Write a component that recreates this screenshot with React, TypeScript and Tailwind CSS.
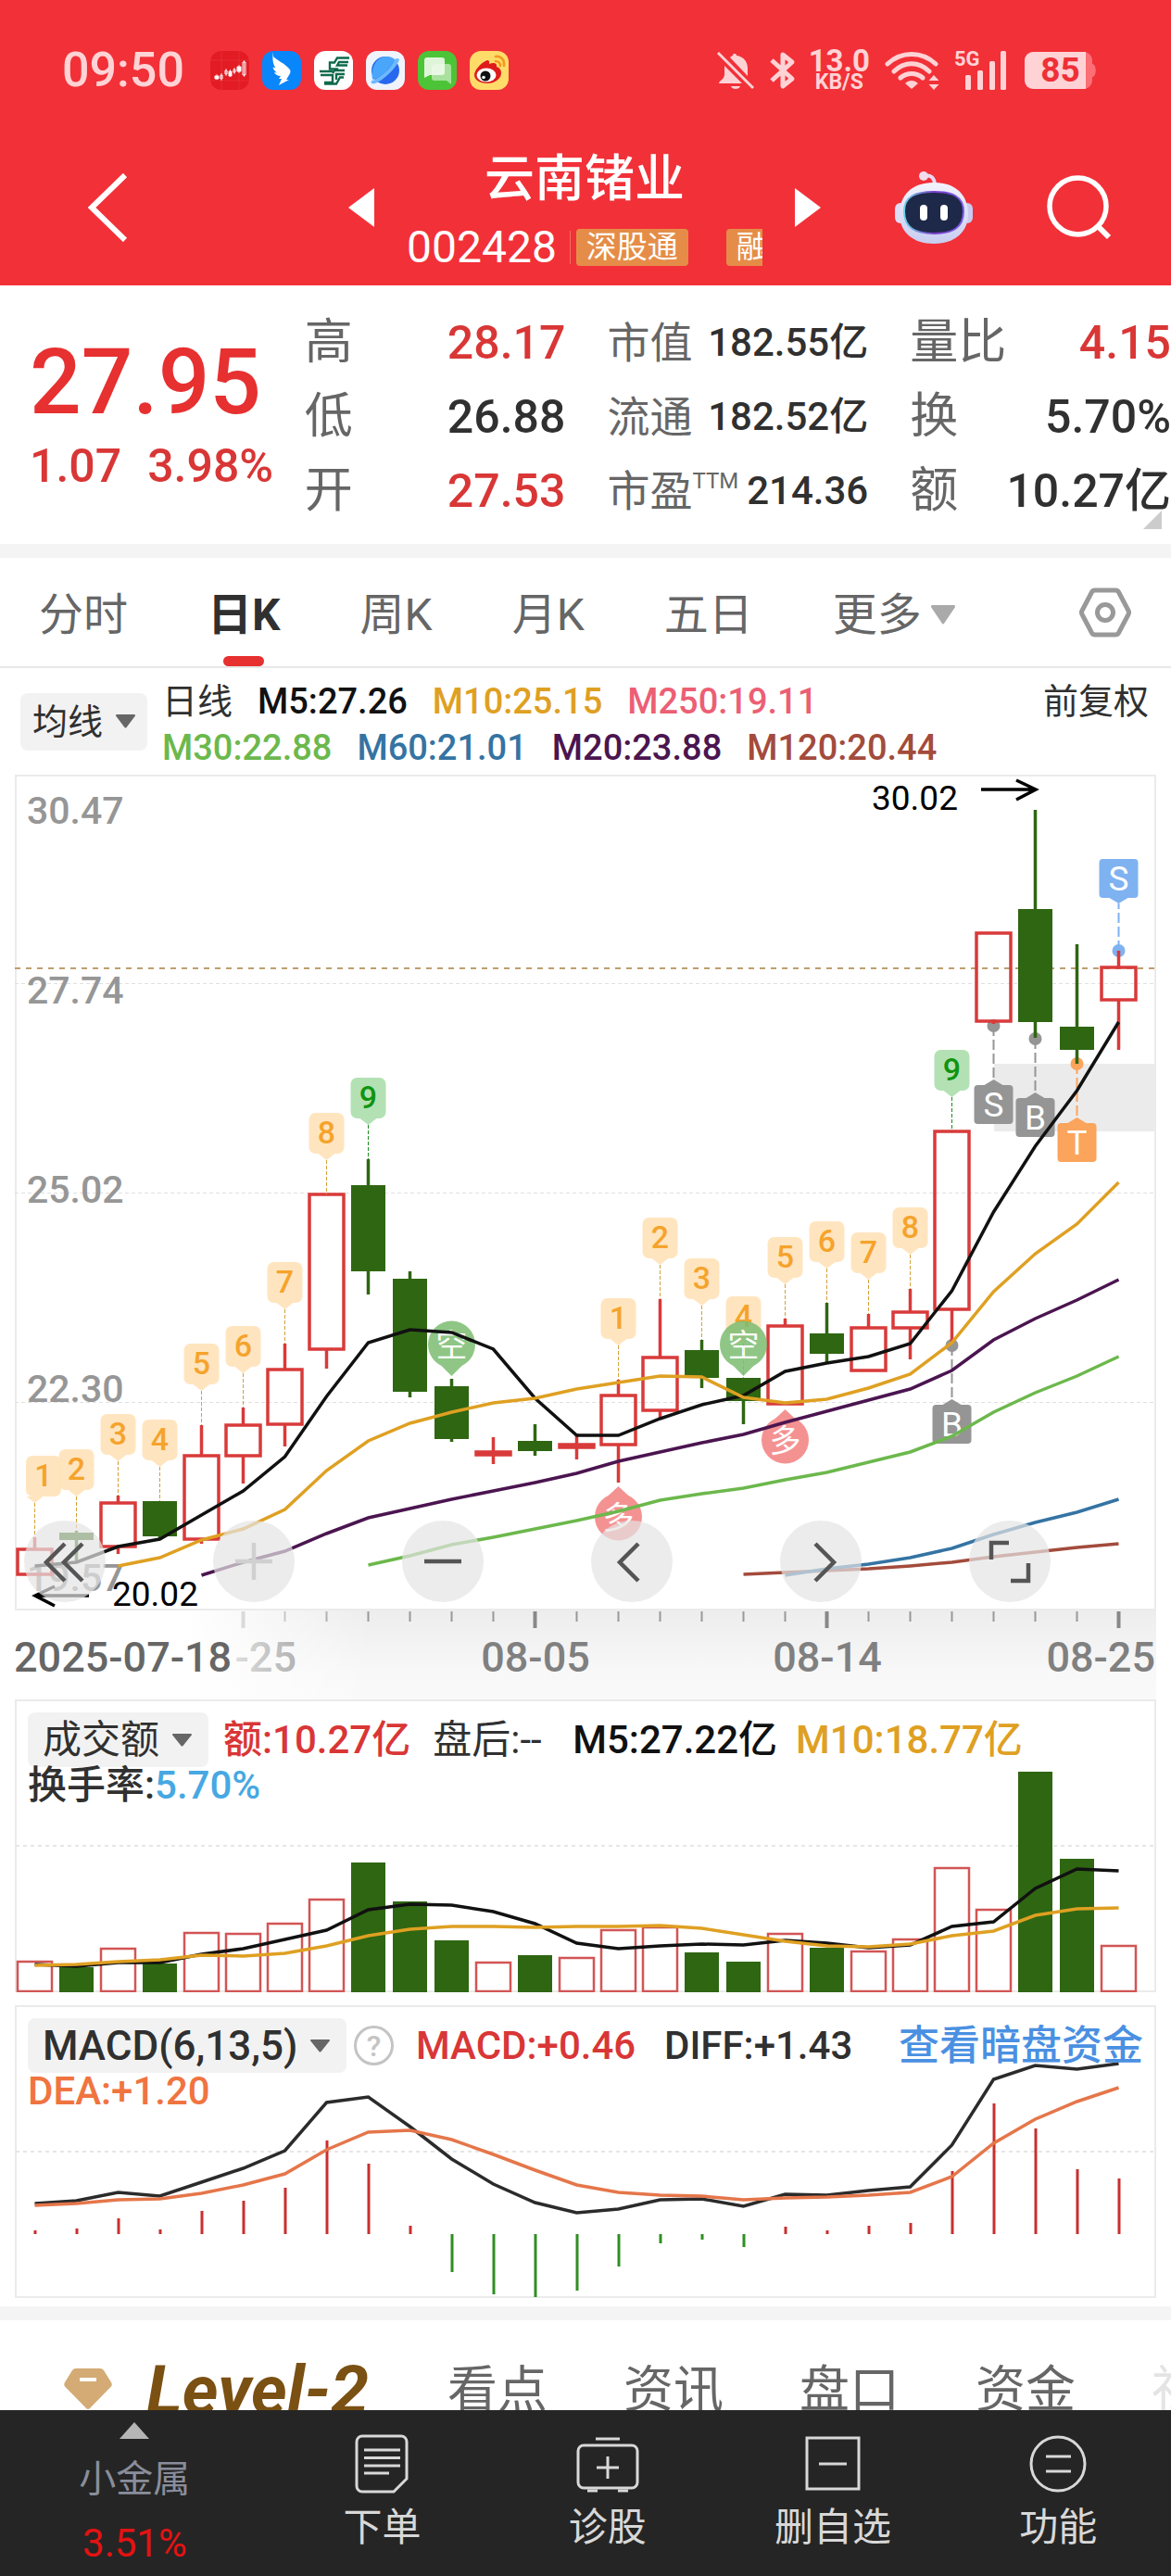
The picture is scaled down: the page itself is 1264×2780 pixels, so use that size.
import type { ReactNode } from "react";

// ---------- data ----------

const STEP = 45;
const FIRST_X = 37.5;
const BODY = 37;

const UP = "#d93a3a";
const DOWN = "#2f6612";
const GOLD = "#dfa022";

// All three panels are cut from one canvas, so y values run on from panel to panel.
// [direction, high, body top, body bottom, low]
type Candle = ["up" | "down", number, number, number, number];

const candles: Candle[] = [
  ["up", 1659, 1672, 1699, 1699],
  ["down", 1652, 1654, 1662, 1685],
  ["up", 1614, 1622, 1669, 1677],
  ["down", 1620, 1620, 1658, 1661],
  ["up", 1538, 1571, 1661, 1666],
  ["up", 1519, 1538, 1571, 1601],
  ["up", 1450, 1478, 1537, 1561],
  ["up", 1289, 1289, 1456, 1477],
  ["down", 1251, 1279, 1372, 1397],
  ["down", 1372, 1380, 1502, 1508],
  ["down", 1488, 1496, 1553, 1556],
  ["up", 1551, 1567, 1570, 1580],
  ["down", 1537, 1555, 1566, 1571],
  ["up", 1547, 1559, 1562, 1575],
  ["up", 1489, 1506, 1559, 1600],
  ["up", 1402, 1465, 1522, 1531],
  ["down", 1446, 1457, 1487, 1498],
  ["down", 1487, 1487, 1512, 1537],
  ["up", 1423, 1431, 1515, 1516],
  ["down", 1406, 1439, 1461, 1470],
  ["up", 1418, 1433, 1479, 1479],
  ["up", 1391, 1416, 1433, 1467],
  ["up", 1221, 1221, 1413, 1448],
  ["up", 1007, 1007, 1102, 1105],
  ["down", 874, 981, 1103, 1120],
  ["down", 1019, 1108, 1133, 1148],
  ["up", 1026, 1044, 1079, 1133],
];

// nine-turn counts: candle index -> count
const counts: [number, number][] = [
  [0, 1], [1, 2], [2, 3], [3, 4], [4, 5], [5, 6], [6, 7], [7, 8], [8, 9],
  [14, 1], [15, 2], [16, 3], [17, 4], [18, 5], [19, 6], [20, 7], [21, 8], [22, 9],
];

const averages = [
  { color: "#a34b3c", from: 17, ys: [1699, 1697, 1695, 1693, 1690, 1686, 1680, 1675, 1670, 1666] },
  { color: "#3474a3", from: 18, ys: [1700, 1693, 1688, 1681, 1671, 1656, 1643, 1632, 1618] },
  {
    color: "#6cb84c",
    from: 8,
    ys: [1689, 1679, 1667, 1659, 1650, 1641, 1631, 1619, 1612, 1606, 1597, 1589, 1578, 1567, 1550, 1524, 1503, 1485, 1464],
  },
  {
    color: "#4b1550",
    from: 4,
    ys: [1700, 1686, 1674, 1655, 1638, 1628, 1618, 1609, 1600, 1590, 1577, 1567, 1557, 1548, 1535, 1523, 1511, 1499, 1479, 1446, 1423, 1403, 1381],
  },
  {
    color: "#111111",
    from: 0,
    ys: [1690, 1686, 1669, 1661, 1635, 1609, 1572, 1507, 1449, 1435, 1438, 1456, 1509, 1549, 1549, 1531, 1516, 1506, 1480, 1471, 1464, 1450, 1393, 1308, 1237, 1177, 1103],
  },
  {
    color: GOLD,
    from: 2,
    ys: [1690, 1681, 1662, 1650, 1629, 1587, 1555, 1536, 1524, 1514, 1509, 1499, 1492, 1485, 1486, 1508, 1514, 1510, 1498, 1483, 1449, 1394, 1353, 1321, 1276],
  },
];

const volumeTops = [
  2117, 2123, 2103, 2119, 2086, 2087, 2076, 2050, 2010, 2052, 2094, 2118, 2110, 2113, 2083, 2080, 2107, 2117, 2087,
  2102, 2106, 2093, 2016, 2061, 1912, 2006, 2100,
];
const volumeM5 = [
  2120, 2122, 2118, 2118, 2109, 2103, 2093, 2083, 2061, 2055, 2056, 2063, 2076, 2097, 2103, 2100, 2098, 2099, 2094,
  2097, 2102, 2099, 2079, 2074, 2038, 2017, 2019,
];
const volumeM10 = [
  2121, 2120, 2117, 2115, 2110, 2111, 2108, 2100, 2089, 2082, 2079, 2079, 2080, 2079, 2079, 2078, 2081, 2088, 2095,
  2100, 2101, 2098, 2089, 2084, 2067, 2060, 2059,
];

const macdEnds = [
  2407, 2405, 2394, 2406, 2386, 2375, 2361, 2310, 2335, 2402, 2452, 2476, 2479, 2472, 2446, 2421, 2417, 2425, 2403,
  2407, 2402, 2399, 2343, 2270, 2297, 2341, 2351,
];
const diff = [
  2378, 2375, 2366, 2370, 2355, 2340, 2321, 2269, 2263, 2295, 2330, 2357, 2377, 2388, 2384, 2374, 2373, 2381, 2368,
  2369, 2364, 2360, 2315, 2244, 2229, 2233, 2227,
];
const dea = [
  2380, 2378, 2374, 2373, 2367, 2358, 2346, 2320, 2301, 2299, 2309, 2325, 2342, 2358, 2366, 2369, 2370, 2374, 2372,
  2371, 2369, 2366, 2349, 2313, 2287, 2268, 2253,
];

const xOf = (i: number) => FIRST_X + i * STEP;
const toPoints = (ys: number[], from = 0) => ys.map((y, i) => `${xOf(i + from)},${y}`).join(" ");

// ---------- header ----------

function AppIcons() {
  return (
    <div className="flex gap-[14px]">
      <svg viewBox="0 0 42 42" className="size-[42px]">
        <rect width="42" height="42" rx="12" fill="#e31b23" />
        <path d="M0 10H42M0 32H42M12 0V42M31 0V42" stroke="#ea3a40" strokeWidth="0.6" />
        <g fill="#fff" stroke="#fff" strokeWidth="1">
          <path d="M5 27h4v3H5zM20 22h3v5h-3zM29 17h4v5h-4z" />
          <path d="M11 26h2v4h-2zM16 21h2v4h-2zM25 20h2v3h-2zM35 12h3v14h-3z" fill="none" />
          <path d="M7 25v6M12 24v8M17 19v8M21.500 20v8M26 18v7M31 15v9M36.500 10v18" strokeWidth="0.700" />
        </g>
      </svg>
      <svg viewBox="0 0 42 42" className="size-[42px]">
        <rect width="42" height="42" rx="12" fill="#0a86fb" />
        <path
          d="M12 6c5 5 12 7 17 13 2 2 2 4 0 7l-3 5h3L18 37l3-7h-3l2-3c-4 0-6-2-7-4l3 .500c-3-2-4-4-4.500-6l3 1c-2.500-4-4-9-2.500-17.500z"
          fill="#fff"
        />
      </svg>
      <svg viewBox="0 0 42 42" className="size-[42px]">
        <rect width="42" height="42" rx="12" fill="#fff" />
        <g fill="none" stroke="#0f6a4c" strokeWidth="2.400">
          <path d="M38 7.500H25l-3 5h-5v7h8l1 2" />
          <path d="M37 12H27l-2 3.500h11" />
          <path d="M6 22h14M7 26h13v8H11" />
          <path d="M33 21H22l-2 3M33 25H24v6" />
          <path d="M11 35.500h13l4-7h4" />
        </g>
      </svg>
      <svg viewBox="0 0 42 42" className="size-[42px]">
        <rect width="42" height="42" rx="12" fill="#eef3fc" />
        <circle cx="21" cy="21" r="15" fill="#2768ee" />
        <path d="M7 30C5 20 10 7 21 6c5 0 8 1 10 3C27 18 18 27 8 31z" fill="#49a6fb" />
        <path d="M31 9c4-2 6-1 4 3C30 21 18 32 10 35c-5 1-5-1-3-4 0 1 2 1 4-1C20 25 28 17 31 9z" fill="#6db9ff" />
      </svg>
      <svg viewBox="0 0 42 42" className="size-[42px]">
        <rect width="42" height="42" rx="12" fill="#4cc437" />
        <path d="M18 14h15a3 3 0 0 1 3 3v19l-5-4H18a3 3 0 0 1-3-3V17z" fill="#a9e29d" />
        <path d="M10 7h16a3 3 0 0 1 3 3v13a3 3 0 0 1-3 3H13l-6 3V10a3 3 0 0 1 3-3z" fill="#effbec" fillOpacity="0.900" />
      </svg>
      <svg viewBox="0 0 42 42" className="size-[42px]">
        <rect width="42" height="42" rx="12" fill="#ffdc6a" />
        <path
          d="M17 11c2-2 5-1 4 3 5-2 9-1 8 3 3 1 5 3 5 7 0 6-7 11-15 11S5 31 5 26c0-5 7-13 12-15z"
          fill="#df1b1b"
        />
        <ellipse cx="18" cy="26" rx="10.500" ry="7.500" fill="#fff" />
        <circle cx="17" cy="27" r="5.500" fill="#111" />
        <circle cx="15" cy="28.500" r="1.800" fill="#fff" />
        <path d="M28 6c6-1 10 4 9 10M28 11c3 0 5 2 5 5" fill="none" stroke="#f29a1f" strokeWidth="2.600" strokeLinecap="round" />
      </svg>
    </div>
  );
}

function StatusBar() {
  return (
    <div className="flex h-[148px] items-center justify-between pt-1 pl-[67px] pr-[81px] text-[#ffd3d5]">
      <div className="flex items-center gap-7">
        <span className="text-[52px] leading-none font-medium">09:50</span>
        <AppIcons />
      </div>
      <div className="flex items-center">
        <svg viewBox="0 0 40 42" className="h-[42px] w-10" fill="currentColor">
          <path d="M19 3c1.500 0 2 .500 2 2 8 1 12 7 12 14v8L14 7c1-1 2-1.500 3-2 0-1.500.500-2 2-2zM8 16l19 19H2c0-3 6-4 6-10zM15 38h10c-1 4-9 4-10 0z" />
          <path d="M1 2l38 38" stroke="currentColor" strokeWidth="3" />
        </svg>
        <svg viewBox="0 0 28 44" className="ml-[17px] h-11 w-7" fill="none" stroke="currentColor" strokeWidth="5">
          <path d="M2 11l22 20-10 8V5l10 8L2 33" strokeLinejoin="round" />
        </svg>
        <div className="ml-3.5 flex flex-col items-center font-bold">
          <span className="text-[33px] leading-[25px]">13.0</span>
          <span className="text-[23px] leading-[21px]">KB/S</span>
        </div>
        <svg viewBox="0 0 60 42" className="ml-4 h-[42px] w-[60px]" fill="none" stroke="currentColor" strokeWidth="5">
          <path d="M3 14c15-14 37-14 52 0M10 22c11-11 27-11 38 0M17 29c7-6 17-6 24 0" strokeLinecap="round" />
          <path d="M29 41l-7-6c4-4 10-4 14 0zM53 26l5.500 6h-11zM53 42l5.500-6h-11z" fill="currentColor" stroke="none" />
        </svg>
        <div className="relative ml-[15px] h-[42px] w-[58px]">
          <svg viewBox="0 0 58 42" className="size-full" fill="currentColor">
            <rect x="12" y="26" width="6" height="16" rx="1.500" />
            <rect x="25" y="21" width="6" height="21" rx="1.500" />
            <rect x="38" y="11" width="6" height="31" rx="1.500" />
            <rect x="50" y="0" width="6" height="42" rx="1.500" />
          </svg>
          <span className="absolute top-0 left-0 text-[22px] leading-[18px] font-bold">5G</span>
        </div>
        <div className="relative ml-[18px] h-10 w-[77px]">
          <svg viewBox="0 0 77 40" className="size-full">
            <path d="M60 0h4a9 9 0 0 1 9 9v4c5 0 5 14 0 14v4a9 9 0 0 1-9 9h-4z" fill="#fb6f75" />
            <path d="M9 0h57v40H9a9 9 0 0 1-9-9V9a9 9 0 0 1 9-9z" fill="currentColor" />
          </svg>
          <span className="absolute inset-0 text-center text-[37px] leading-10 font-bold text-[#ee3038]">85</span>
        </div>
      </div>
    </div>
  );
}

function TitleBar() {
  return (
    <div className="flex h-[160px] items-center pb-2 pl-[94px] pr-[64px] text-white">
      <button type="button" aria-label="返回">
        <svg viewBox="0 0 44 74" className="h-[74px] w-11" fill="none" stroke="currentColor" strokeWidth="6">
          <path d="M41 2L5 37l36 35" />
        </svg>
      </button>
      <div className="mr-20 ml-auto flex items-center gap-[35px]">
        <button type="button" aria-label="上一只">
          <svg viewBox="0 0 28 42" className="h-[42px] w-7" fill="currentColor">
            <path d="M28 0v42L0 21z" />
          </svg>
        </button>
        <div className="flex w-[384px] flex-col items-center gap-5 pt-1.5">
          <h1 className="text-[54px] leading-[60px] font-medium">云南锗业</h1>
          <div className="flex w-full items-center overflow-hidden">
            <span className="text-[48px] leading-[46px]">002428</span>
            <span className="ml-3.5 h-9 w-px shrink-0 bg-[#f0705a]" />
            <span className="ml-1.5 h-10 shrink-0 rounded bg-[#e58d48] px-[11px] text-[33px] leading-10">深股通</span>
            <span className="ml-[41px] h-10 shrink-0 rounded bg-[#e58d48] px-[11px] text-[33px] leading-10">融</span>
          </div>
        </div>
        <button type="button" aria-label="下一只">
          <svg viewBox="0 0 28 42" className="h-[42px] w-7" fill="currentColor">
            <path d="M0 0v42l28-21z" />
          </svg>
        </button>
      </div>
      <button type="button" aria-label="智能助手">
        <svg viewBox="0 0 84 78" className="h-[78px] w-[84px]">
          <defs>
            <linearGradient id="shell" x1="0" y1="0" x2="0" y2="1">
              <stop offset="0" stopColor="#f4f3fd" />
              <stop offset="1" stopColor="#c8cdf0" />
            </linearGradient>
            <linearGradient id="rim" x1="0" y1="0" x2="1" y2="0">
              <stop offset="0" stopColor="#6bd3e8" />
              <stop offset="0.500" stopColor="#7a3fc8" />
              <stop offset="1" stopColor="#7a5be8" />
            </linearGradient>
          </defs>
          <path d="M31 5c8-2 11 2 12 8" fill="none" stroke="#e9d9f2" strokeWidth="4" />
          <circle cx="31" cy="5" r="5" fill="#f3dcec" />
          <rect x="0" y="34" width="12" height="22" rx="6" fill="#dcdcf5" />
          <rect x="72" y="34" width="12" height="22" rx="6" fill="#c9cbf2" />
          <path d="M42 12c24 0 37 14 37 34S64 78 42 78 5 66 5 46s13-34 37-34z" fill="url(#shell)" />
          <path
            d="M42 22c20 0 32 5 32 21 0 18-12 24-32 24s-32-6-32-24c0-16 12-21 32-21z"
            fill="#1e2848"
            stroke="url(#rim)"
            strokeWidth="2"
          />
          <rect x="27" y="36" width="8" height="17" rx="4" fill="#fff" />
          <rect x="49" y="36" width="8" height="17" rx="4" fill="#fff" />
        </svg>
      </button>
      <button type="button" aria-label="搜索" className="ml-20">
        <svg viewBox="0 0 70 70" className="size-[70px]" fill="none" stroke="currentColor" strokeWidth="5.500">
          <circle cx="33.500" cy="33.500" r="30.500" />
          <path d="M55 55l12 12" strokeWidth="6" />
        </svg>
      </button>
    </div>
  );
}

// ---------- quote ----------

const quoteColumns = [
  {
    label: "text-[52px]",
    value: "text-[50px]",
    rows: [
      { name: "高", text: "28.17", color: "text-[#d93636]" },
      { name: "低", text: "26.88", color: "text-[#303030]" },
      { name: "开", text: "27.53", color: "text-[#d93636]" },
    ],
  },
  {
    label: "text-[46px]",
    value: "text-[42px]",
    rows: [
      { name: "市值", text: "182.55亿", color: "text-[#303030]" },
      { name: "流通", text: "182.52亿", color: "text-[#303030]" },
      { name: "市盈", sup: "TTM", text: "214.36", color: "text-[#303030]" },
    ],
  },
  {
    label: "text-[52px]",
    value: "text-[50px]",
    rows: [
      { name: "量比", text: "4.15", color: "text-[#d93636]" },
      { name: "换", text: "5.70%", color: "text-[#303030]" },
      { name: "额", text: "10.27亿", color: "text-[#303030]" },
    ],
  },
];

function Quote() {
  return (
    <section className="relative flex h-[279px]">
      <div className="w-[26%] shrink-0 pt-[55px] pl-8 font-medium text-[#e73030]">
        <div className="text-[98px] leading-[100px]">27.95</div>
        <div className="flex h-20 items-center gap-7 text-[50px] text-[#d93636]">
          <span>1.07</span>
          <span>3.98%</span>
        </div>
      </div>
      <div className="grid flex-1 grid-cols-3 gap-x-[45px] pt-[22px]">
        {quoteColumns.map((col) => (
          <dl key={col.rows[0].name}>
            {col.rows.map((r) => (
              <div key={r.name} className="flex h-20 items-center justify-between leading-none whitespace-nowrap">
                <dt className={`${col.label} flex text-[#666]`}>
                  {r.name}
                  {"sup" in r && <span className="text-[24px]">{r.sup}</span>}
                </dt>
                <dd className={`${col.value} ${r.color} font-medium`}>{r.text}</dd>
              </div>
            ))}
          </dl>
        ))}
      </div>
      <svg viewBox="0 0 20 20" className="absolute right-2.5 bottom-4 size-5" fill="#ccc">
        <path d="M20 0v20H0z" />
      </svg>
    </section>
  );
}

// ---------- period tabs ----------

const periods = ["分时", "日K", "周K", "月K", "五日"];

function Caret({ className }: { className: string }) {
  return (
    <svg viewBox="0 0 20 14" className={className} fill="currentColor" preserveAspectRatio="none">
      <path d="M1 0h18a1 1 0 0 1 .800 1.600L11 13a1.300 1.300 0 0 1-2 0L.200 1.600A1 1 0 0 1 1 0z" />
    </svg>
  );
}

function PeriodTabs() {
  return (
    <nav className="flex h-[119px] items-center gap-[86px] border-b-2 border-[#e8e8e8] pr-[43px] pl-[42px] text-[48px] leading-none text-[#666]">
      {periods.map((p) => (
        <button
          key={p}
          type="button"
          className={
            p === "日K" ? "relative h-full shrink-0 pt-1.5 font-bold text-[#303030]" : "h-full shrink-0 pt-1.5"
          }
        >
          {p}
          {p === "日K" && (
            <span className="absolute bottom-0 left-1/2 h-[11px] w-11 -translate-x-1/2 rounded-full bg-[#e73030]" />
          )}
        </button>
      ))}
      <button type="button" className="flex h-full shrink-0 items-center gap-2.5 pt-1.5">
        更多
        <Caret className="h-[21px] w-[26px] text-[#aaa]" />
      </button>
      <button type="button" aria-label="设置" className="ml-auto">
        <svg viewBox="0 0 56 54" className="h-[54px] w-14" fill="none" stroke="#999" strokeWidth="5">
          <path d="M17 3h22a4 4 0 0 1 3.500 2L53 25a4 4 0 0 1 0 4L42.500 49a4 4 0 0 1-3.500 2H17a4 4 0 0 1-3.500-2L3 29a4 4 0 0 1 0-4L13.500 5A4 4 0 0 1 17 3z" />
          <circle cx="28" cy="27" r="8.500" />
        </svg>
      </button>
    </nav>
  );
}

function AverageLegend() {
  return (
    <div className="flex h-[115px] items-center pr-6 pl-[22px] text-[38px] leading-none whitespace-nowrap text-[#303030]">
      <button type="button" className="flex h-[62px] shrink-0 items-center gap-3.5 rounded-lg bg-[#f2f2f2] px-[13px]">
        均线
        <Caret className="h-[15px] w-[21px] text-[#666]" />
      </button>
      <div className="ml-4 flex-1 pt-1.5">
        <div className="flex h-[50px] items-center gap-[27px]">
          <span>日线</span>
          <span className="font-medium text-[#111]">M5:27.26</span>
          <span className="font-medium text-[#dfa022]">M10:25.15</span>
          <span className="font-medium text-[#ec5f74]">M250:19.11</span>
          <span className="ml-auto">前复权</span>
        </div>
        <div className="flex h-[50px] items-center gap-[27px] font-medium">
          <span className="text-[#6cb84c]">M30:22.88</span>
          <span className="text-[#3474a3]">M60:21.01</span>
          <span className="text-[#4b1550]">M20:23.88</span>
          <span className="text-[#a34b3c]">M120:20.44</span>
        </div>
      </div>
    </div>
  );
}

// ---------- candle chart ----------

function CountTag({ index, count }: { index: number; count: number }) {
  const x = xOf(index);
  const high = candles[index][1];
  const boxX = Math.max(x, 47);
  const top = high - 88;
  const green = count === 9;
  return (
    <g>
      <line x1={x} x2={x} y1={top + 51} y2={high} stroke={green ? "#1d8a1d" : "#d3a13a"} strokeWidth="1" strokeDasharray="4 2" />
      <g fill={green ? "#b3e1b4" : "#ffe2b8"} fillOpacity={green ? 1 : 0.9}>
        <rect x={boxX - 19} y={top} width="38" height="44" rx="7" />
        <path d={`M${x - 9} ${top + 44}h18l-9 7z`} />
      </g>
      <text x={boxX} y={top + 33} textAnchor="middle" fontSize="34" fontWeight="500" fill={green ? "#109410" : "#f5a32c"}>
        {count}
      </text>
    </g>
  );
}

function SidePin({ index, y, label, color, flip }: { index: number; y: number; label: string; color: string; flip?: boolean }) {
  const x = xOf(index);
  const tip = flip ? y - 33 : y + 34;
  const base = flip ? y - 20 : y + 20;
  return (
    <g fill={color}>
      <circle cx={x} cy={y} r="25.500" />
      <path d={`M${x - 14} ${base}L${x} ${tip}L${x + 14} ${base}z`} />
      <text x={x} y={y + 13} textAnchor="middle" fontSize="34" fill="#fff">
        {label}
      </text>
    </g>
  );
}

// buy / sell / T marks, hung below the dot unless `above` is set
function TradeTag({ index, dot, label, color, above }: { index: number; dot: number; label: string; color: string; above?: boolean }) {
  const x = xOf(index);
  const top = above ? dot - 99 : dot + 64;
  const tip = above ? dot - 51 : dot + 58;
  const edge = above ? top + 42 : top;
  return (
    <g fill={color}>
      <line x1={x} x2={x} y1={dot} y2={tip} stroke={color} strokeWidth="2" strokeDasharray="11 4" />
      <circle cx={x} cy={dot} r="7" />
      <path d={`M${x - 10} ${edge}L${x} ${tip}L${x + 10} ${edge}z`} />
      <rect x={x - 21} y={top} width="42" height="42" rx="4" />
      <text x={x} y={top + 34} textAnchor="middle" fontSize="37" fill="#fff">
        {label}
      </text>
    </g>
  );
}

const chartButtons: { label: string; icon: ReactNode; faded?: boolean }[] = [
  { label: "最早", icon: <path d="M44 25L24 45l20 20M63 25L43 45l20 20" /> },
  { label: "放大", icon: <path d="M24 44h40M44 24v40" />, faded: true },
  { label: "缩小", icon: <path d="M24 44h40" /> },
  { label: "左移", icon: <path d="M51 25L31 45l20 20" /> },
  { label: "右移", icon: <path d="M38 25l20 20-20 20" /> },
  { label: "全屏", icon: <path d="M24 42V24h19M45 65h19V46" /> },
];

function CandleChart() {
  return (
    <section className="relative">
      <svg viewBox="0 836 1264 902" className="block w-full" role="img" aria-label="日K线图">
        <rect x="17" y="837" width="1230" height="900" fill="none" stroke="#ebebeb" strokeWidth="2" />
        <g stroke="#e0e0e0" strokeWidth="1" strokeDasharray="4 3">
          <path d="M16 1061.500H1247M16 1287.500H1247M16 1513.500H1247" />
        </g>
        <g fontSize="41" fontWeight="500" fill="#969696">
          <text x="29" y="889">30.47</text>
          <text x="29" y="1083">27.74</text>
          <text x="29" y="1298">25.02</text>
          <text x="29" y="1513">22.30</text>
          <text x="29" y="1717">19.57</text>
        </g>
        <line x1="16" x2="1247" y1="1045" y2="1045" stroke="#bd9f6e" strokeWidth="2" strokeDasharray="6 6" />
        <rect x="1073" y="1148" width="175" height="73" fill="#ebebeb" />

        <TradeTag index={22} dot={1452} label="B" color="#959595" />
        <TradeTag index={23} dot={1107} label="S" color="#959595" />
        <TradeTag index={24} dot={1121} label="B" color="#959595" />
        <TradeTag index={25} dot={1148} label="T" color="#fba45c" />
        <TradeTag index={26} dot={1026} label="S" color="#7fb2f0" above />

        {candles.map(([dir, high, top, bottom, low], i) => {
          const x = xOf(i);
          return dir === "up" ? (
            <g key={i} stroke={UP} strokeWidth="3.500" fill="none">
              <path d={`M${x} ${high}V${top}M${x} ${bottom}V${low}`} />
              <rect x={x - BODY / 2} y={top} width={BODY} height={bottom - top} />
            </g>
          ) : (
            <g key={i} fill={DOWN}>
              <path d={`M${x} ${high}V${low}`} stroke={DOWN} strokeWidth="3.500" />
              <rect x={x - BODY / 2} y={top} width={BODY} height={bottom - top} />
            </g>
          );
        })}

        {counts.map(([index, count]) => (
          <CountTag key={index} index={index} count={count} />
        ))}
        <g opacity="0.850">
          <SidePin index={10} y={1451} label="空" color="#7cbd72" />
          <SidePin index={17} y={1451} label="空" color="#7cbd72" />
          <SidePin index={14} y={1637} label="多" color="#f37f7f" flip />
          <SidePin index={18} y={1554} label="多" color="#f37f7f" flip />
        </g>

        <g fill="none" strokeWidth="3.500">
          {averages.map((a) => (
            <polyline key={a.color} points={toPoints(a.ys, a.from)} stroke={a.color} />
          ))}
        </g>

        <g fontSize="37" fill="#000">
          <text x="941" y="874">30.02</text>
          <text x="121" y="1733">20.02</text>
        </g>
        <g fill="none" stroke="#000" strokeWidth="3.500">
          <path d="M1059 852H1118M1097 842L1118 852L1097 863" />
          <path d="M96 1722H38M59 1712L38 1722L59 1733" />
        </g>
      </svg>
      <div className="absolute inset-x-0 bottom-[9px] flex justify-between pr-[130px] pl-[26px]">
        {chartButtons.map((b) => (
          <button
            key={b.label}
            type="button"
            aria-label={b.label}
            className="size-[88px] rounded-full bg-[#e4e4e4]/70"
          >
            <svg viewBox="0 0 88 88" className="size-full" fill="none" stroke={b.faded ? "#d0d0d0" : "#555"} strokeWidth="4.500">
              {b.icon}
            </svg>
          </button>
        ))}
      </div>
    </section>
  );
}

function DateAxis() {
  return (
    <svg viewBox="0 1738 1264 96" className="block w-full" role="img" aria-label="日期">
      <defs>
        <linearGradient id="axisShade" x1="0" y1="0" x2="0" y2="1">
          <stop offset="0" stopColor="#ededed" />
          <stop offset="0.700" stopColor="#f8f8f8" />
          <stop offset="1" stopColor="#fafafa" />
        </linearGradient>
        <linearGradient id="axisFade" x1="0" y1="0" x2="1" y2="0">
          <stop offset="0.500" stopColor="#fff" />
          <stop offset="0.850" stopColor="#fff" stopOpacity="0.300" />
          <stop offset="1" stopColor="#fff" stopOpacity="0" />
        </linearGradient>
      </defs>
      <rect x="0" y="1738" width="1248" height="96" fill="url(#axisShade)" />
      {candles.map((_, i) =>
        i < 5 ? null : i % 7 === 5 ? (
          <line key={i} x1={xOf(i)} x2={xOf(i)} y1="1739" y2="1757" stroke="#888" strokeWidth="4" />
        ) : (
          <line key={i} x1={xOf(i)} x2={xOf(i)} y1="1739" y2="1750" stroke="#999" strokeWidth="2" />
        ),
      )}
      <g fontSize="45" fontWeight="500" fill="#808080">
        <text x="320" y="1804" textAnchor="end">-25</text>
        <text x="578" y="1804" textAnchor="middle">08-05</text>
        <text x="893" y="1804" textAnchor="middle">08-14</text>
        <text x="1247" y="1804" textAnchor="end">08-25</text>
      </g>
      <rect x="0" y="1738" width="400" height="96" fill="url(#axisFade)" />
      <text x="15" y="1804" fontSize="45" fontWeight="500" fill="#666">2025-07-18</text>
    </svg>
  );
}

// ---------- indicator panels ----------

function VolumePanel() {
  return (
    <section className="relative">
      <svg viewBox="0 1834 1264 316" className="block w-full" role="img" aria-label="成交额">
        <rect x="17" y="1835" width="1230" height="314" fill="none" stroke="#ebebeb" strokeWidth="2" />
        <line x1="17" x2="1247" y1="1992" y2="1992" stroke="#e6e6e6" strokeWidth="2" strokeDasharray="4 4" />
        {volumeTops.map((top, i) =>
          candles[i][0] === "up" ? (
            <rect key={i} x={xOf(i) - BODY / 2} y={top} width={BODY} height={2149 - top} fill="none" stroke="#d25555" strokeWidth="2.500" />
          ) : (
            <rect key={i} x={xOf(i) - BODY / 2} y={top} width={BODY} height={2150 - top} fill={DOWN} />
          ),
        )}
        <polyline points={toPoints(volumeM5)} fill="none" stroke="#111" strokeWidth="3.500" />
        <polyline points={toPoints(volumeM10)} fill="none" stroke={GOLD} strokeWidth="3.500" />
      </svg>
      <div className="absolute inset-x-0 top-[15px] pl-[30px] text-[42px] leading-none whitespace-nowrap text-[#303030]">
        <div className="flex h-[57px] items-center">
          <button type="button" className="flex h-[59px] items-center gap-3.5 rounded-lg bg-[#f2f2f2] pr-[18px] pl-4">
            成交额
            <Caret className="h-[14px] w-[21px] text-[#666]" />
          </button>
          <span className="ml-4 font-medium text-[#d93636]">额:10.27亿</span>
          <span className="ml-6 w-[151px]">盘后:--</span>
          <span className="font-medium text-[#111]">M5:27.22亿</span>
          <span className="ml-5 font-medium text-[#dfa022]">M10:18.77亿</span>
        </div>
        <div className="font-medium">
          换手率:<span className="text-[#47a8e2]">5.70%</span>
        </div>
      </div>
    </section>
  );
}

function MacdPanel() {
  return (
    <section className="relative mt-3.5">
      <svg viewBox="0 2164 1264 316" className="block w-full" role="img" aria-label="MACD">
        <rect x="17" y="2165" width="1230" height="314" fill="none" stroke="#ebebeb" strokeWidth="2" />
        <line x1="17" x2="1247" y1="2322" y2="2322" stroke="#e6e6e6" strokeWidth="2" strokeDasharray="4 4" />
        {macdEnds.map((y, i) => (
          <line key={i} x1={xOf(i) + 0.5} x2={xOf(i) + 0.5} y1="2411" y2={y} stroke={y > 2411 ? "#2f8f22" : "#c92f2f"} strokeWidth="3" />
        ))}
        <polyline points={toPoints(diff)} fill="none" stroke="#2b2b2b" strokeWidth="3.500" />
        <polyline points={toPoints(dea)} fill="none" stroke="#e5764a" strokeWidth="3.500" />
      </svg>
      <div className="absolute inset-x-0 top-[15px] pr-[30px] pl-[30px] text-[42px] leading-none font-medium whitespace-nowrap text-[#303030]">
        <div className="flex h-[57px] items-center">
          <button type="button" className="flex h-[59px] w-[344px] items-center justify-between rounded-lg bg-[#f2f2f2] pr-[18px] pl-4 text-[44px]">
            MACD(6,13,5)
            <Caret className="h-[14px] w-[21px] text-[#666]" />
          </button>
          <button
            type="button"
            aria-label="指标说明"
            className="ml-2 size-[43px] rounded-full border-3 border-[#c4c4c4] text-[32px] leading-none text-[#c4c4c4]"
          >
            ?
          </button>
          <span className="ml-6 w-[268px] text-[#d93636]">MACD:+0.46</span>
          <span>DIFF:+1.43</span>
          <a href="#fund" className="ml-auto text-[44px] text-[#4a90e2]">
            查看暗盘资金
          </a>
        </div>
        <div className="text-[#f07440]">DEA:+1.20</div>
      </div>
    </section>
  );
}

// ---------- bottom ----------

function InfoTabs() {
  return (
    <nav className="flex h-[97px] items-start overflow-hidden pt-[46px] pl-[68px] text-[54px] leading-[60px] whitespace-nowrap text-[#666]">
      <svg viewBox="0 0 54 44" className="mt-1.5 h-11 w-[54px] shrink-0">
        <path d="M14 0h26a5 5 0 0 1 4 2l8 13a4 4 0 0 1-.500 5L29 43a3 3 0 0 1-4 0L2.500 20a4 4 0 0 1-.500-5l8-13a5 5 0 0 1 4-2z" fill="#d4ab75" />
        <path d="M18 12h18" stroke="#fff" strokeWidth="4" />
      </svg>
      <button type="button" className="ml-9 w-[246px] shrink-0 text-left text-[74px] font-bold text-[#7a5013] italic">
        Level-2
      </button>
      <div className="ml-[79px] flex gap-[82px]">
        <button type="button">看点</button>
        <button type="button">资讯</button>
        <button type="button">盘口</button>
        <button type="button">资金</button>
        <button type="button" className="text-[#e4e4e4]">社区</button>
      </div>
    </nav>
  );
}

const actions: { label: string; icon: ReactNode }[] = [
  {
    label: "下单",
    icon: (
      <>
        <path d="M11 2h42a6 6 0 0 1 6 6v40L45 62H11a6 6 0 0 1-6-6V8a6 6 0 0 1 6-6z" />
        <path d="M13 17h39M13 25.500h39M13 34h39M13 42h27" />
      </>
    ),
  },
  {
    label: "诊股",
    icon: (
      <>
        <rect x="0" y="12" width="64" height="46" rx="6" />
        <path d="M19 5h26M32 24v24M20 36h24M10 61h11M43 61h11" />
      </>
    ),
  },
  {
    label: "删自选",
    icon: (
      <>
        <rect x="4" y="4" width="56" height="55" />
        <path d="M17 32h30" />
      </>
    ),
  },
  {
    label: "功能",
    icon: (
      <>
        <circle cx="32" cy="32" r="29" />
        <path d="M19 24h27M19 40h27" />
      </>
    ),
  },
];

function ActionBar() {
  return (
    <footer className="flex h-[179px] bg-[#252525] text-[42px] leading-none text-[#d8d8d8]">
      <button type="button" className="flex w-[23%] flex-col items-center pt-[13px]">
        <svg viewBox="0 0 32 18" className="h-[18px] w-8" fill="#b5b5b5">
          <path d="M16 0l16 18H0z" />
        </svg>
        <span className="mt-6 text-[40px] text-[#8a8d9a]">小金属</span>
        <span className="mt-7 text-[#e51212]">3.51%</span>
      </button>
      {actions.map((a) => (
        <button key={a.label} type="button" className="flex flex-1 flex-col items-center gap-4 pt-[26px]">
          <svg viewBox="-2 0 68 64" className="h-16 w-[68px]" fill="none" stroke="currentColor" strokeWidth="3">
            {a.icon}
          </svg>
          {a.label}
        </button>
      ))}
    </footer>
  );
}

export default function App() {
  return (
    <div className="w-full overflow-hidden bg-white font-['Roboto','Noto_Sans_CJK_SC',sans-serif]">
      <header className="bg-[#f23038]">
        <StatusBar />
        <TitleBar />
      </header>
      <Quote />
      <div className="h-[15px] bg-[#f4f4f4]" />
      <PeriodTabs />
      <AverageLegend />
      <CandleChart />
      <DateAxis />
      <VolumePanel />
      <MacdPanel />
      <div className="mt-[9px] h-[15px] bg-[#f4f4f4]" />
      <InfoTabs />
      <ActionBar />
    </div>
  );
}
